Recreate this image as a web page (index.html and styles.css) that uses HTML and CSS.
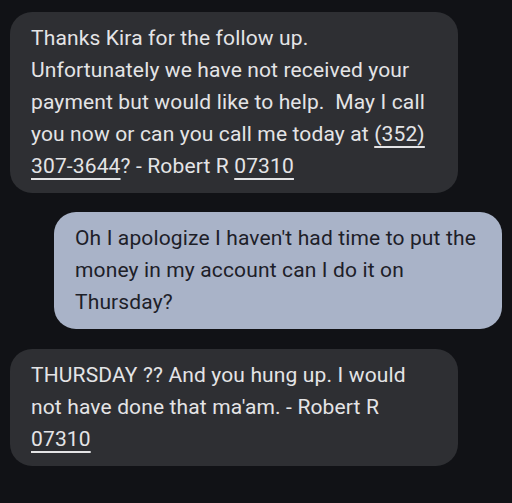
FILE: index.html
```html
<!DOCTYPE html>
<html>
<head>
<meta charset="utf-8">
<link rel="stylesheet" href="styles.css">
</head>
<body>
<div class="chat">
  <div class="bubble incoming">Thanks Kira for the follow up.<br>Unfortunately we have not received your<br>payment but would like to help.&nbsp; May I call<br>you now or can you call me today at <span class="link">(352)</span><br><span class="link">307-3644</span>? - Robert R <span class="link">07310</span></div>
  <div class="bubble outgoing">Oh I apologize I haven't had time to put the<br>money in my account can I do it on<br>Thursday?</div>
  <div class="bubble incoming last">THURSDAY ?? And you hung up. I would<br>not have done that ma'am. - Robert R<br><span class="link">07310</span></div>
</div>
</body>
</html>
```
FILE: styles.css
```css
html, body {
  margin: 0;
  padding: 0;
  background: #111216;
  height: 100%;
}
.chat {
  display: flex;
  flex-direction: column;
  gap: 19px;
  padding: 12px 10px;
}
.bubble {
  width: 448px;
  box-sizing: border-box;
  padding: 10px 12px 11px 21px;
  border-radius: 22px;
  font-family: Roboto, "Noto Sans", sans-serif;
  font-size: 21px;
  line-height: 32px;
  letter-spacing: 0.14px;
  white-space: nowrap;
}
.incoming {
  align-self: flex-start;
  background: #2e2f33;
  color: #e4e4e6;
}
.outgoing {
  align-self: flex-end;
  background: #a9b3c8;
  color: #1d2028;
}
.last {
  margin-top: 1px;
}
.link {
  text-decoration: underline;
  text-decoration-thickness: 2px;
  text-underline-offset: 5px;
}
```
